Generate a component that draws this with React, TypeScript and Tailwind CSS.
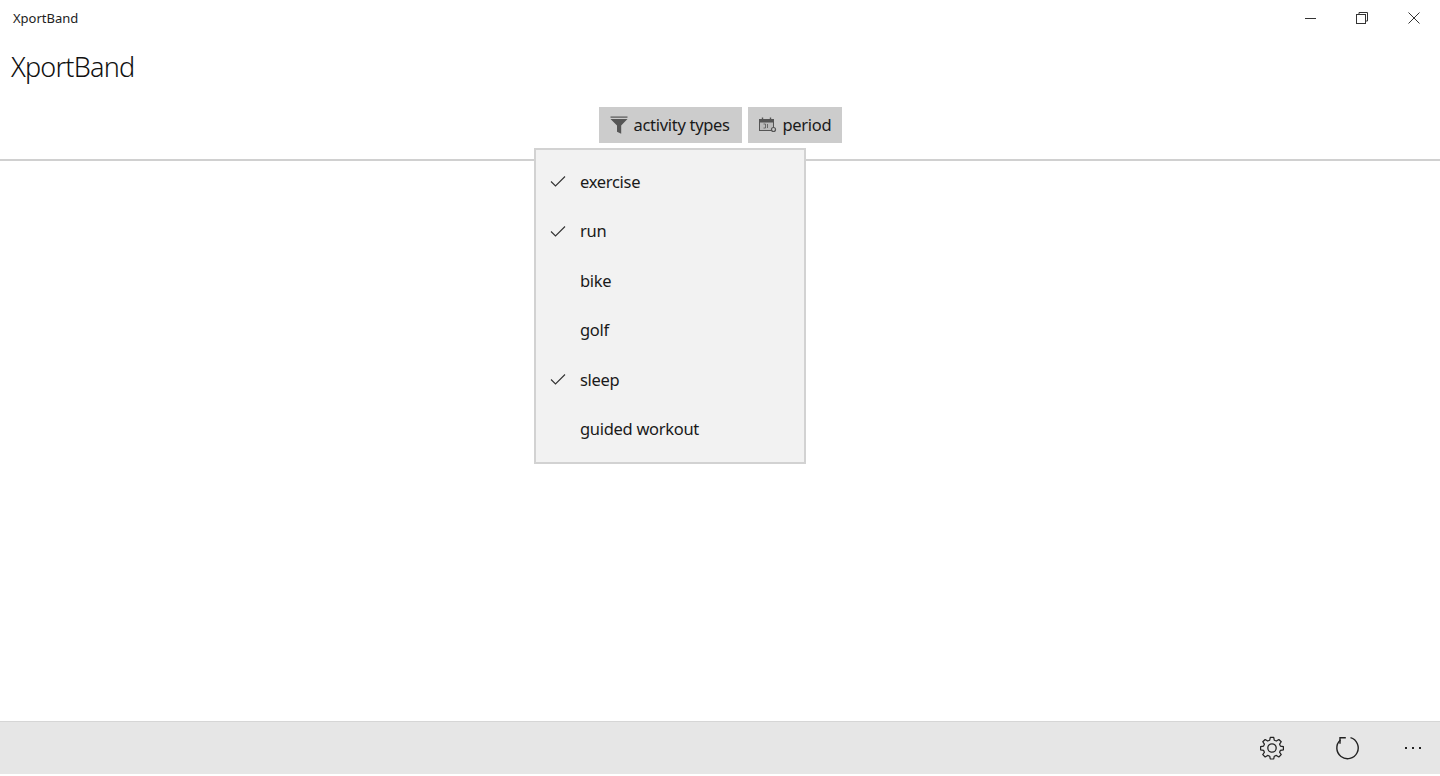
const items = [
  { label: "exercise", checked: true },
  { label: "run", checked: true },
  { label: "bike", checked: false },
  { label: "golf", checked: false },
  { label: "sleep", checked: true },
  { label: "guided workout", checked: false },
]

function Check() {
  return (
    <svg width="16" height="16" viewBox="0 0 16 16" fill="none" stroke="#333" strokeWidth="1.1">
      <path d="M1 8.5 L5.5 13 L15 3.5" />
    </svg>
  )
}

function FunnelIcon() {
  return (
    <svg width="18" height="18" viewBox="0 0 18 18" fill="#555">
      <rect x="0.5" y="0.5" width="17" height="1.2" />
      <path d="M0.5 3 H17.5 L11.2 9.5 V17.8 L7 15.8 V9.5 Z" />
    </svg>
  )
}

function CalendarIcon() {
  return (
    <svg width="18" height="16" viewBox="0 0 18 16" fill="none" stroke="#555" strokeWidth="1">
      <rect x="0.5" y="2.5" width="14" height="11" fill="#bbb" />
      <rect x="0.5" y="2.5" width="14" height="2.5" fill="#555" />
      <path d="M3.5 0.5 V3 M11.5 0.5 V3" strokeWidth="1.4" />
      <path d="M4.5 7 H6.5 V11 H4.5 M8.5 7 V11" strokeWidth="0.8" />
      <circle cx="14.5" cy="12.5" r="2" fill="#c8c8c8" strokeWidth="1.2" />
    </svg>
  )
}

function GearIcon() {
  return (
    <svg width="24" height="24" viewBox="0 0 24 24" fill="none" stroke="#222" strokeWidth="1.3" strokeLinejoin="round">
      <path d="M10.2 1.5 H13.8 L14.4 4.6 L16.6 5.5 L19.2 3.8 L21.7 6.3 L20 8.9 L20.9 11 L24 11.6 V15 L20.9 15.6 L20 17.7 L21.7 20.3 L19.2 22.8 L16.6 21.1 L14.4 22 L13.8 25 H10.2 L9.6 22 L7.4 21.1 L4.8 22.8 L2.3 20.3 L4 17.7 L3.1 15.6 L0 15 V11.6 L3.1 11 L4 8.9 L2.3 6.3 L4.8 3.8 L7.4 5.5 L9.6 4.6 Z" transform="translate(0.6 0) scale(0.95 0.92)" />
      <circle cx="12" cy="12" r="4.2" />
    </svg>
  )
}

function RefreshIcon() {
  return (
    <svg width="26" height="26" viewBox="0 0 26 26" fill="none" stroke="#222" strokeWidth="1.4">
      <path d="M15.5 2.7 A10.7 10.7 0 1 1 5.4 5" />
      <path d="M5 8.8 V2.8 H10.8" />
    </svg>
  )
}

export default function App() {
  return (
    <div className="relative flex h-[776px] flex-col overflow-hidden bg-white text-[#1a1a1a] font-['Noto_Sans',sans-serif]">
      <div className="flex h-[36px] shrink-0 items-center justify-between pl-[13px]">
        <span className="pt-px text-[13px] text-[#222]">XportBand</span>
        <div className="flex items-center">
          <div className="flex h-[36px] w-[52px] items-center justify-center">
            <div className="h-px w-[11px] bg-[#333]" />
          </div>
          <div className="flex h-[36px] w-[52px] items-center justify-center">
            <svg width="12" height="12" viewBox="0 0 12 12" fill="none" stroke="#333">
              <path d="M3 2.5 V0.5 H11.5 V9 H9.5" />
              <rect x="0.5" y="2.5" width="9" height="9" />
            </svg>
          </div>
          <div className="flex h-[36px] w-[52px] items-center justify-center">
            <svg width="12" height="12" viewBox="0 0 12 12" fill="none" stroke="#333">
              <path d="M0.5 0.5 L11.5 11.5 M11.5 0.5 L0.5 11.5" />
            </svg>
          </div>
        </div>
      </div>

      <div className="h-[60px] shrink-0 pl-[11px] pt-[11px] text-[27px] leading-[40px] font-light tracking-[-0.8px] text-[#111]">XportBand</div>

      <div className="flex h-[65px] shrink-0 justify-center gap-[6px] border-b-2 border-[#d0d0d0] pt-[11px]">
        <button className="flex h-[36px] w-[143px] items-center gap-[6px] bg-[#cccccc] pl-[11px] text-[16.5px] tracking-[-0.3px]">
          <FunnelIcon />
          activity types
        </button>
        <button className="flex h-[36px] w-[94px] items-center gap-[6px] bg-[#cccccc] pl-[11px] text-[16.5px] tracking-[-0.3px]">
          <CalendarIcon />
          period
        </button>
      </div>

      <div className="flex-1" />

      <div className="mb-[2px] flex h-[53px] shrink-0 items-center justify-end border-t border-[#d6d6d6] bg-[#e6e6e6]">
        <div className="flex w-[76px] justify-center"><GearIcon /></div>
        <div className="flex w-[76px] justify-center"><RefreshIcon /></div>
        <div className="flex w-[54px] justify-center gap-[5px]">
          <span className="h-[2px] w-[2px] bg-[#222]" />
          <span className="h-[2px] w-[2px] bg-[#222]" />
          <span className="h-[2px] w-[2px] bg-[#222]" />
        </div>
      </div>

      <div className="absolute left-[534px] top-[148px] h-[316px] w-[272px] border-2 border-[#d2d2d2] bg-[#f2f2f2] pt-[6.5px]">
        {items.map(item => (
          <div key={item.label} className="flex h-[49.5px] items-center pl-[14px] text-[16.5px] tracking-[-0.3px]">
            <span className="flex w-[30px]">{item.checked && <Check />}</span>
            <span className="pt-[2px]">{item.label}</span>
          </div>
        ))}
      </div>
    </div>
  )
}
